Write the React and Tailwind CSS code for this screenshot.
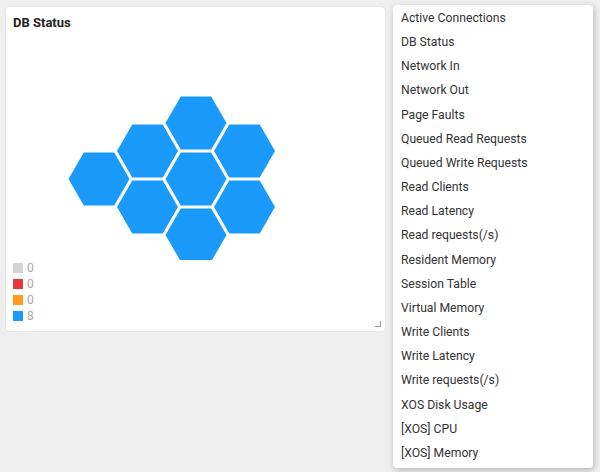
import React from "react";

const R = 30.5;
const H = (R * Math.sqrt(3)) / 2;
const centers = [
  [99, 179],
  [147.5, 151],
  [147.5, 207],
  [196, 123],
  [196, 179],
  [196, 235],
  [244.5, 151],
  [244.5, 207],
];

function hexPoints(cx, cy) {
  const pts = [
    [cx - R, cy],
    [cx - R / 2, cy - H],
    [cx + R / 2, cy - H],
    [cx + R, cy],
    [cx + R / 2, cy + H],
    [cx - R / 2, cy + H],
  ];
  return pts.map((p) => `${p[0] - 6},${p[1] - 31}`).join(" ");
}

const legend = [
  ["bg-[#d3d3d3]", "0"],
  ["bg-[#e5393b]", "0"],
  ["bg-[#ff9a1f]", "0"],
  ["bg-[#1a9bfc]", "8"],
];

const items = [
  "Active Connections",
  "DB Status",
  "Network In",
  "Network Out",
  "Page Faults",
  "Queued Read Requests",
  "Queued Write Requests",
  "Read Clients",
  "Read Latency",
  "Read requests(/s)",
  "Resident Memory",
  "Session Table",
  "Virtual Memory",
  "Write Clients",
  "Write Latency",
  "Write requests(/s)",
  "XOS Disk Usage",
  "[XOS] CPU",
  "[XOS] Memory",
];

export default function App() {
  return (
    <div
      className="w-[600px] h-[472px] bg-[#efefef] flex items-start overflow-hidden"
      style={{ fontFamily: "Roboto, 'Liberation Sans', sans-serif" }}
    >
      <div className="relative ml-[6px] mt-[7px] w-[379px] h-[324px] bg-white rounded-[4px] shadow-[0_0_2px_rgba(0,0,0,0.12)] flex flex-col">
        <div className="pt-[8px] pl-[7px] h-[24px] text-[13px] leading-[16px] font-bold text-[#222]">
          DB Status
        </div>
        <svg width="379" height="229" className="block">
          {centers.map(([cx, cy], i) => (
            <polygon key={i} points={hexPoints(cx, cy)} fill="#1a9bfc" />
          ))}
        </svg>
        <div className="flex flex-col pl-[7px]">
          {legend.map(([c, v], i) => (
            <div key={i} className="flex items-center h-[16px]">
              <div className={`w-[10px] h-[10px] ${c}`} />
              <span className="ml-[4px] text-[12px] text-[#a9a9a9] leading-[16px]">{v}</span>
            </div>
          ))}
        </div>
        <div className="absolute right-[4px] bottom-[4px] w-[6px] h-[6px] border-r border-b border-[#999]" />
      </div>
      <div className="ml-[8px] mt-[5px] w-[200px] bg-white rounded-[4px] shadow-[1px_2px_6px_rgba(0,0,0,0.25)] pt-[1px] pb-[3px]">
        {items.map((t) => (
          <div key={t} className="h-[24.17px] leading-[24px] pl-[8px] text-[12.2px] text-[#333]">
            {t}
          </div>
        ))}
      </div>
    </div>
  );
}
